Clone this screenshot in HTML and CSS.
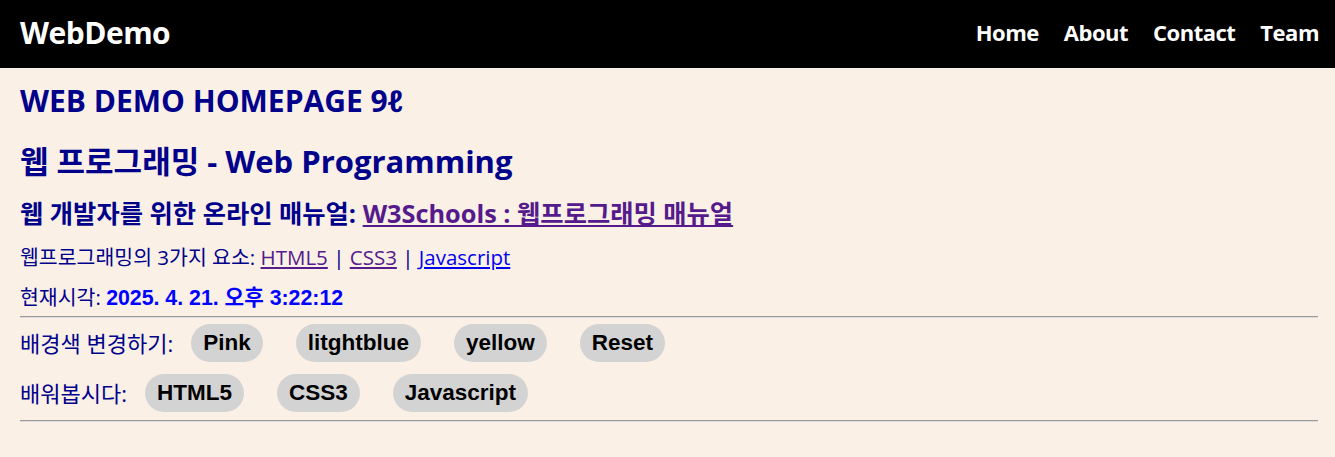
FILE: index.html
```html
<!DOCTYPE html>
<html lang="ko">
<head>
<meta charset="utf-8">
<title>WebDemo</title>
<link rel="stylesheet" href="styles.css">
</head>
<body>
<header class="topbar">
  <div class="logo">WebDemo</div>
  <nav class="nav">
    <a href="#">Home</a>
    <a href="#">About</a>
    <a href="#">Contact</a>
    <a href="#">Team</a>
  </nav>
</header>
<main class="content">
  <h1 class="title">WEB DEMO HOMEPAGE 9ℓ</h1>
  <h2 class="subtitle">웹 프로그래밍 - Web Programming</h2>
  <h3 class="manual">웹 개발자를 위한 온라인 매뉴얼: <a class="visited" href="#">W3Schools : 웹프로그래밍 매뉴얼</a></h3>
  <p class="line">웹프로그래밍의 3가지 요소: <a class="visited" href="#">HTML5</a> | <a class="visited" href="#">CSS3</a> | <a class="link" href="#">Javascript</a></p>
  <p class="line time">현재시각: <span class="clock">2025. 4. 21. 오후 3:22:12</span></p>
  <hr class="rule">
  <div class="row">
    <span class="label">배경색 변경하기:</span>
    <button class="pill">Pink</button>
    <button class="pill">litghtblue</button>
    <button class="pill">yellow</button>
    <button class="pill">Reset</button>
  </div>
  <div class="row second">
    <span class="label">배워봅시다:</span>
    <button class="pill">HTML5</button>
    <button class="pill">CSS3</button>
    <button class="pill">Javascript</button>
  </div>
  <hr class="rule">
</main>
</body>
</html>
```
FILE: styles.css
```css
* { box-sizing: border-box; }
html, body { margin: 0; }
body {
  background: #faf0e6;
  color: #00008b;
  font-family: "Open Sans", "Noto Sans CJK KR", sans-serif;
}
.topbar {
  background: #000;
  height: 68px;
  display: flex;
  align-items: center;
  justify-content: space-between;
  padding: 0 16px 4px 20px;
}
.logo {
  color: #fff;
  font-weight: 700;
  font-size: 30px;
  letter-spacing: -0.5px;
}
.nav {
  display: flex;
  gap: 25px;
}
.nav a {
  color: #fff;
  text-decoration: none;
  font-weight: 700;
  font-size: 22px;
  letter-spacing: -0.5px;
}
.content {
  padding: 0 17px 0 20px;
}
.title {
  margin: 0;
  padding-top: 15px;
  height: 73px;
  font-size: 30px;
  line-height: 36px;
  color: #00008b;
}
.subtitle {
  margin: 0;
  font-size: 31px;
  line-height: 40px;
  height: 57px;
  color: #00008b;
}
.manual {
  margin: 0;
  font-size: 25.3px;
  line-height: 30px;
  height: 45px;
}
.line {
  margin: 0;
  font-size: 20.5px;
  line-height: 28px;
  height: 40px;
}
.line.time { height: 33px; }
.visited { color: #551a8b; }
.link { color: #0000ee; }
.clock {
  color: #0000ff;
  font-weight: 700;
  font-size: 21.3px;
  font-family: "Liberation Sans", "Noto Sans CJK KR", sans-serif;
}
.rule {
  margin: 0;
  border: 0;
  border-top: 1px solid #999;
  border-bottom: 1px solid #ddd;
}
.row {
  display: flex;
  align-items: flex-start;
  gap: 33px;
  padding-top: 6px;
  height: 50px;
}
.row.second { height: 52px; }
.label {
  font-size: 22px;
  line-height: 38px;
  margin-right: -15px;
}
.pill {
  background: #d3d3d3;
  border: 0;
  border-radius: 20px;
  height: 38px;
  padding: 0 12px;
  font-family: "Liberation Sans", Arial, sans-serif;
  font-weight: 700;
  font-size: 22.5px;
  color: #000;
}
```
